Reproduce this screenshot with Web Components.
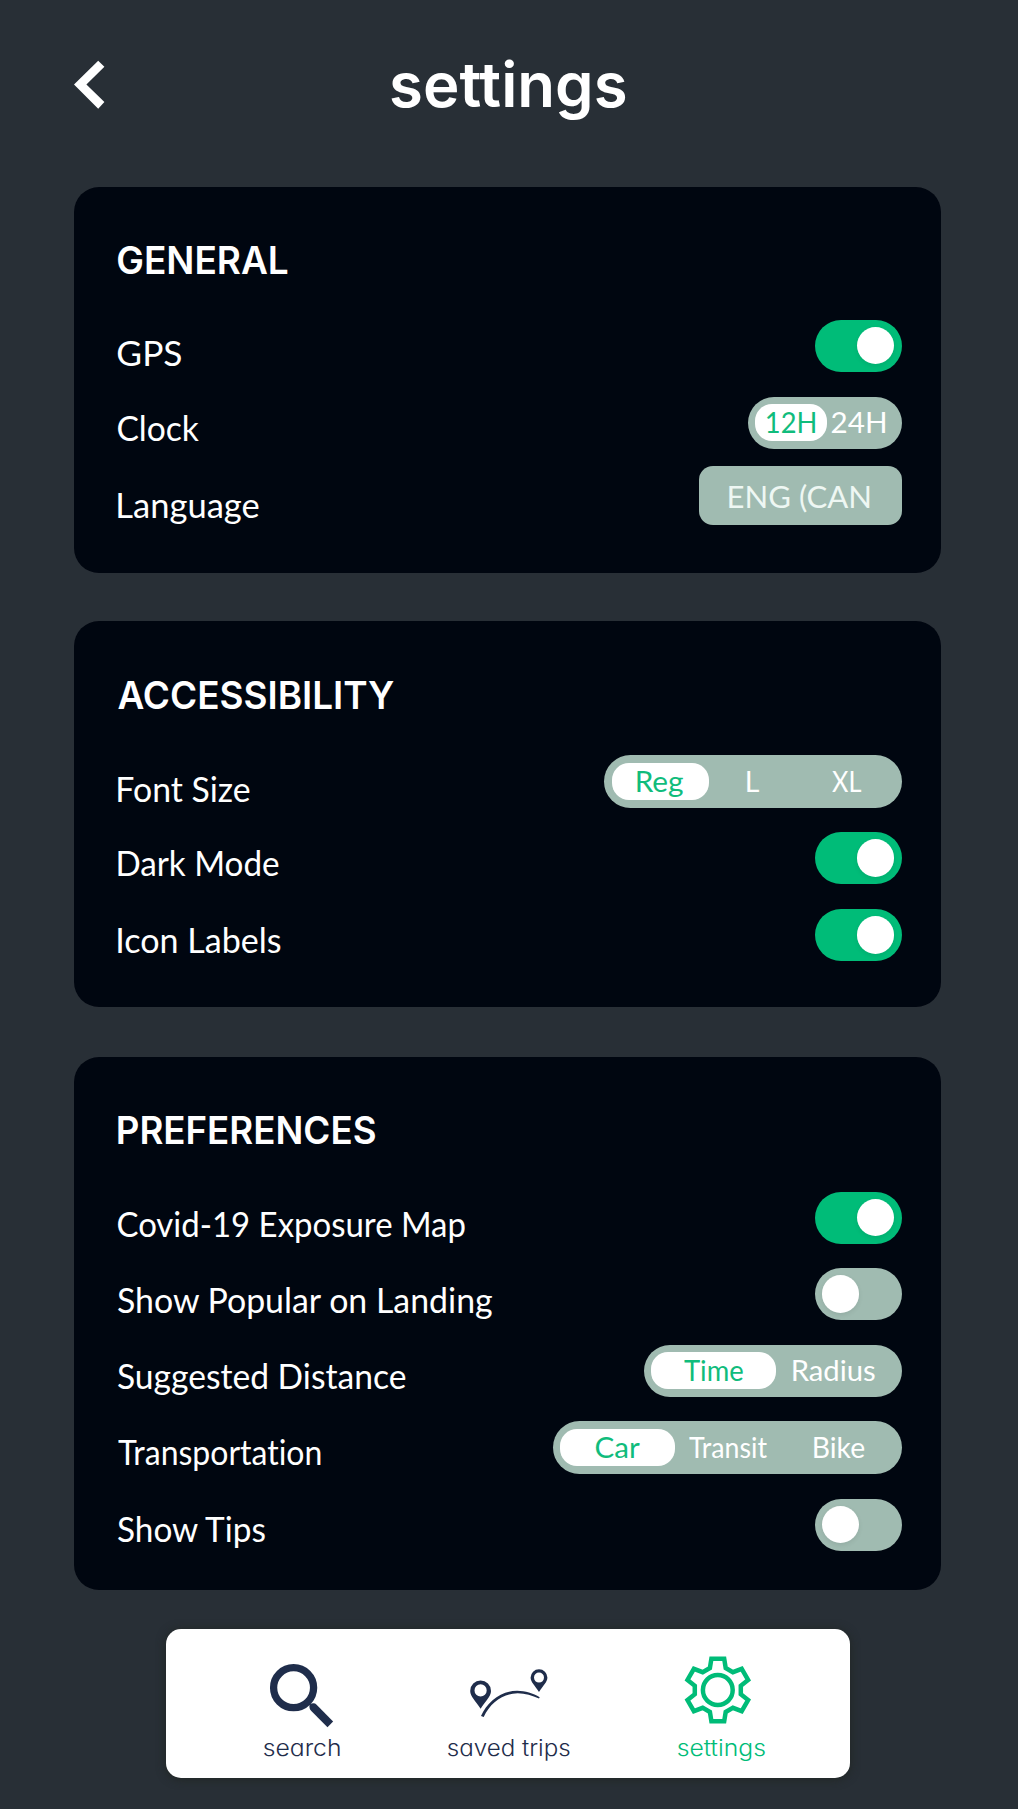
<!DOCTYPE html>
<html lang="en">
<head>
<meta charset="utf-8">
<title>settings</title>
<style>
html,body{margin:0;background:#282f36}
body{width:1018px;height:1809px;overflow:hidden;font-family:Lato,"Open Sans",sans-serif;color:#fff}
</style>
</head>
<body>
<settings-page></settings-page>
<script>
const define = (name, html, setup) => customElements.define(name, class extends HTMLElement {
  connectedCallback() {
    if (this.shadowRoot) return;
    const root = this.attachShadow({mode: 'open'});
    const t = document.createElement('template');
    t.innerHTML = html;
    root.append(t.content.cloneNode(true));
    if (setup) setup(this, root);
  }
});

// A single line of type whose visible ink spans exactly the width given in "w".
const ctx = document.createElement('canvas').getContext('2d');
define('fit-text', `
<style>
:host{display:block;flex:none;line-height:1;white-space:nowrap;font-variant-ligatures:none}
span{display:inline-block;vertical-align:top;transform-origin:0 0;line-height:1}
</style><span></span>`, (el, root) => {
  const span = root.querySelector('span');
  const text = el.getAttribute('text'), w = +el.getAttribute('w');
  span.textContent = text;
  el.style.width = w + 'px';
  const cs = getComputedStyle(el);
  el.style.height = cs.fontSize;
  // Side bearings are read at ten times the size, where rounding is negligible.
  ctx.font = cs.fontWeight + ' ' + parseFloat(cs.fontSize) * 10 + 'px ' + cs.fontFamily;
  const m = ctx.measureText(text);
  const left = -m.actualBoundingBoxLeft / 10, right = (m.width - m.actualBoundingBoxRight) / 10;
  const k = w / (span.getBoundingClientRect().width - left - right);
  span.style.transform = 'translateX(' + (-left * k) + 'px) scaleX(' + k + ')';
});

define('toggle-switch', `
<style>
:host{display:flex;box-sizing:border-box;width:87px;height:52px;margin:.5px .2px 0 0;border-radius:26px;background:#a0bbb1;padding:7.4px 7.2px;align-items:center}
:host([on]){background:#00bc78;justify-content:flex-end}
i{width:37.4px;height:37.4px;border-radius:50%;background:#fff;box-shadow:0 2px 5px rgba(0,0,0,.08)}
</style><i></i>`);

define('segment-option', `
<style>
:host{display:flex;flex:none;box-sizing:border-box;justify-content:center;align-items:flex-start;width:var(--w);height:37px;padding-top:3.2px;border-radius:17px;color:#fff;font-size:29.5px}
:host([selected]){background:#fff;color:#10bc7c}
</style><slot></slot>`);

define('segment-control', `
<style>
:host{display:flex;box-sizing:border-box;width:var(--w);height:52.6px;margin:.3px .3px 0 0;border-radius:27px;background:#a0bbb1;padding:7.7px 0 0 7.3px}
</style><slot></slot>`);

define('select-box', `
<style>
:host{display:flex;justify-content:center;box-sizing:border-box;width:203px;height:59.4px;margin:.5px .3px 0 0;border-radius:14px;background:#a0bbb1;color:#eef7f3;font-size:30px;padding:14.6px 1px 0 0}
</style><slot></slot>`);

define('setting-row', `
<style>
:host{display:flex;justify-content:space-between;align-items:flex-start;height:var(--h)}
fit-text{margin-top:calc(var(--dy) + .9px);font-size:35px}
</style><fit-text></fit-text><slot></slot>`, (el, root) => {
  const old = root.querySelector('fit-text'), label = document.createElement('fit-text');
  label.setAttribute('text', el.getAttribute('label'));
  label.setAttribute('w', el.getAttribute('w'));
  old.replaceWith(label);
});

define('settings-card', `
<style>
:host{display:flex;flex-direction:column;box-sizing:border-box;width:867px;height:var(--h);margin:0 0 var(--gap) 74px;padding:55.4px 39.2px 0 43.5px;border-radius:25px;background:#000610}
header{height:calc(var(--head) - .6px);font:600 37.8px Inter,"Open Sans",sans-serif}
</style><header><slot name="title"></slot></header><slot></slot>`);

define('page-header', `
<style>
:host{display:flex;align-items:flex-start;height:186.5px;box-sizing:border-box;padding:53px 0 0 74px;font:600 62px Inter,"Open Sans",sans-serif}
svg{display:block;width:31px;height:50px;margin:7.3px 285.6px 0 0}
fit-text{margin-top:1.2px}
</style>
<svg viewBox="0 0 31 50"><path fill="#fff" d="M24.2.8 30.4 6.8 12.4 24.4 30.4 42 24.2 48.8 0 24.4Z"/></svg>
<fit-text text="settings" w="234.5"></fit-text>`);

define('nav-item', `
<style>
:host{display:flex;flex-direction:column;align-items:center;width:var(--w);color:#1f2d4b;font:350 22.6px Inter,"Open Sans",sans-serif;font-feature-settings:"cv11"}
:host([active]){color:#00bc78}
.icon{height:99.5px;width:100%;display:flex;justify-content:center;align-items:flex-start}
</style><div class="icon"><slot name="icon"></slot></div><slot></slot>`);

define('bottom-nav', `
<style>
:host{display:flex;box-sizing:border-box;width:683.6px;height:148.6px;margin-left:166px;padding:8px 0 0 75.5px;border-radius:15px;background:#fff;box-shadow:0 1px 8px 1px rgba(32,38,34,.8)}
svg{display:block;width:100px;height:99px;overflow:visible}
</style>
<nav-item style="--w:120px">
  <svg slot="icon" viewBox="251.7 1637 100 99" fill="none" stroke="currentColor">
    <circle cx="293.3" cy="1687.7" r="20" stroke-width="7.3"/>
    <path fill="currentColor" stroke="none" d="M309.2 1704.4Q313.8 1702.2 316.3 1704.7L332.8 1721.6 327.2 1727.2 311 1711Q308.6 1708.5 309.2 1704.4Z"/>
  </svg>
  <fit-text text="search" w="75.5"></fit-text>
</nav-item>
<nav-item style="--w:120px;margin-left:87.3px">
  <svg slot="icon" viewBox="458.8 1637 100 99">
    <g fill="currentColor" fill-rule="evenodd">
    <path d="M480.4 1708.7C475.5 1701.2 470 1696 470 1690.9A10.4 10.4 0 0 1 490.8 1690.9C490.8 1696 485.3 1701.2 480.4 1708.7ZM480.4 1684.3a6.1 6.1 0 1 0 0 12.2a6.1 6.1 0 1 0 0-12.2Z"/>
    <path d="M538.8 1692C534.8 1686 530.4 1682 530.4 1677.6A8.4 8.4 0 0 1 547.2 1677.6C547.2 1682 542.8 1686 538.8 1692ZM538.8 1672.6a5 5 0 1 0 0 10a5 5 0 1 0 0-10Z"/></g>
    <path d="M480.8 1716C487 1702 501 1690.8 517 1690.7C525 1690.8 533 1693.2 539.5 1697.2L538.8 1698.6C532 1695.5 525 1693.3 517.5 1693.2C503 1693.5 490 1702.5 483.5 1717.1Z" fill="currentColor"/>
  </svg>
  <fit-text text="saved trips" w="121.5"></fit-text>
</nav-item>
<nav-item active style="--w:120px;margin-left:92.7px">
  <svg slot="icon" viewBox="671.5 1637 100 99">
    <g transform="translate(718.3 1690)" fill="none" stroke="currentColor" stroke-width="4.5">
      <path id="gear"/><circle r="14.9"/>
    </g>
  </svg>
  <fit-text text="settings" w="86.7"></fit-text>
</nav-item>`, (el, root) => {
  // One tooth and its valley, repeated six times around the hub.
  const tooth = [[-7.9, -22], [-6.4, -31.3], [6.4, -31.3], [7.9, -22]];
  const pts = [];
  for (let i = 0; i < 6; i++) {
    const a = i * Math.PI / 3, c = Math.cos(a), s = Math.sin(a);
    for (const [x, y] of tooth) pts.push((x * c - y * s).toFixed(2) + ' ' + (x * s + y * c).toFixed(2));
  }
  root.querySelector('#gear').setAttribute('d', 'M' + pts.join('L') + 'Z');
});

define('settings-page', `
<style>:host{display:flex;flex-direction:column;width:1018px;height:1809px;background:#282f36}</style>
<page-header></page-header>
<settings-card style="--h:386px;--gap:48.7px;--head:78px">
  <fit-text slot="title" text="GENERAL" w="169.5"></fit-text>
  <setting-row label="GPS" w="63" style="--h:77px;--dy:14.7px"><toggle-switch on></toggle-switch></setting-row>
  <setting-row label="Clock" w="81.2" style="--h:69.2px;--dy:12.7px">
    <segment-control style="--w:153.5px"><segment-option selected style="--w:71.5px"><fit-text text="12H" w="48.3"></fit-text></segment-option><segment-option style="--w:63.5px"><fit-text text="24H" w="53.3"></fit-text></segment-option></segment-control></setting-row>
  <setting-row label="Language" w="140.8" style="--h:60px;--dy:20.2px"><select-box><fit-text text="ENG (CAN" w="140.7"></fit-text></select-box></setting-row>
</settings-card>
<settings-card style="--h:386px;--gap:49.8px;--head:79px">
  <fit-text slot="title" text="ACCESSIBILITY" w="276"></fit-text>
  <setting-row label="Font Size" w="131.7" style="--h:76.5px;--dy:14.7px">
    <segment-control style="--w:297.2px"><segment-option selected style="--w:97px"><fit-text text="Reg" w="46"></fit-text></segment-option><segment-option style="--w:89px"><fit-text text="L" w="12"></fit-text></segment-option><segment-option style="--w:98px"><fit-text text="XL" w="29"></fit-text></segment-option></segment-control></setting-row>
  <setting-row label="Dark Mode" w="160.7" style="--h:77px;--dy:12.5px"><toggle-switch on></toggle-switch></setting-row>
  <setting-row label="Icon Labels" w="162.7" style="--h:60px;--dy:12.2px"><toggle-switch on></toggle-switch></setting-row>
</settings-card>
<settings-card style="--h:532.8px;--gap:39.5px;--head:79.5px">
  <fit-text slot="title" text="PREFERENCES" w="257"></fit-text>
  <setting-row label="Covid-19 Exposure Map" w="347" style="--h:76.3px;--dy:13.6px"><toggle-switch on></toggle-switch></setting-row>
  <setting-row label="Show Popular on Landing" w="374" style="--h:76.7px;--dy:14px"><toggle-switch></toggle-switch></setting-row>
  <setting-row label="Suggested Distance" w="287.5" style="--h:76.7px;--dy:12.7px">
    <segment-control style="--w:257.4px"><segment-option selected style="--w:124.3px"><fit-text text="Time" w="59"></fit-text></segment-option><segment-option style="--w:116px"><fit-text text="Radius" w="82"></fit-text></segment-option></segment-control></setting-row>
  <setting-row label="Transportation" w="202.5" style="--h:77.2px;--dy:11.7px">
    <segment-control style="--w:348.7px"><segment-option selected style="--w:115px"><fit-text text="Car" w="43.7"></fit-text></segment-option><segment-option style="--w:105px"><fit-text text="Transit" w="78"></fit-text></segment-option><segment-option style="--w:119px"><fit-text text="Bike" w="50.3"></fit-text></segment-option></segment-control></setting-row>
  <setting-row label="Show Tips" w="147" style="--h:60px;--dy:11.7px"><toggle-switch></toggle-switch></setting-row>
</settings-card>
<bottom-nav></bottom-nav>`);
</script>
</body>
</html>
